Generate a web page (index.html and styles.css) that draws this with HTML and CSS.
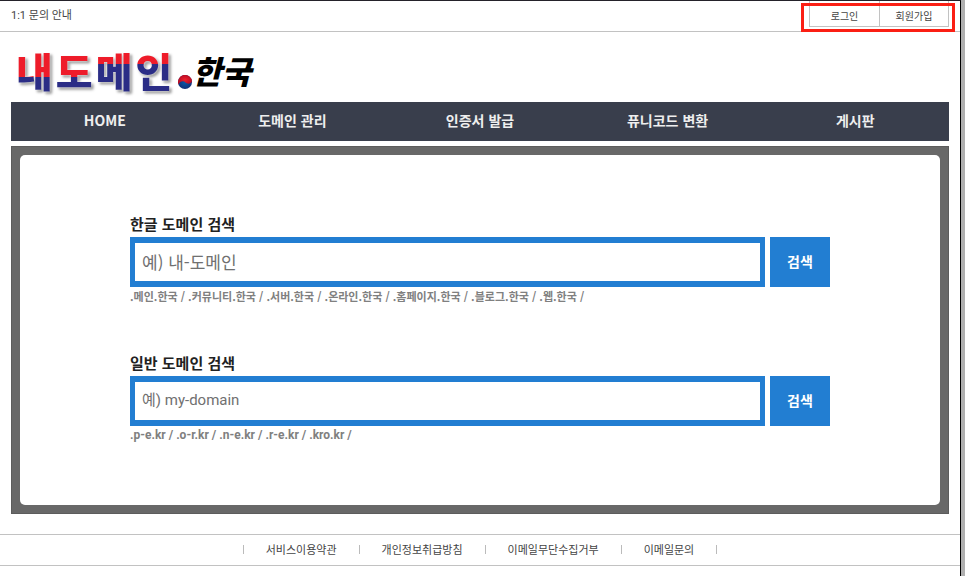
FILE: index.html
```html
<!DOCTYPE html>
<html lang="ko">
<head>
    <meta charset="UTF-8">
    <meta name="viewport" content="width=device-width, initial-scale=1.0">
    <title>내도메인.한국</title>
    <link rel="stylesheet" href="styles.css">
</head>

<body>
<div class="page">
    <header>
        <div class="top-bar">
            <a class="top-notice" href="#">1:1 문의 안내</a>
            <div class="member-links">
                <a href="#">로그인</a>
                <a href="#">회원가입</a>
                <span class="member-mark"></span>
            </div>
        </div>
        <h1 class="logo">
            <a href="#">
                <span class="logo-name"><span class="low">내</span><span class="low">도</span><span>메</span><span>인</span></span>
                <svg class="logo-dot" xmlns="http://www.w3.org/2000/svg" width="14" height="14" viewBox="0 0 14 14">
                    <defs>
                        <radialGradient id="dot-red"><stop offset="0" stop-color="#f0202c"/><stop offset="1" stop-color="#b80d25"/></radialGradient>
                        <radialGradient id="dot-blue"><stop offset="0" stop-color="#075bab"/><stop offset="1" stop-color="#123078"/></radialGradient>
                    </defs>
                    <circle cx="7" cy="7" r="7" fill="url(#dot-blue)"/>
                    <path fill="url(#dot-red)" d="M.5 9.5A7 7 0 1 1 14 6.5C12 9.5 9 9 7.5 7.5C5.500 5.500 2 6 .5 9.500"/>
                </svg>
                <span class="logo-tld">한국</span>
            </a>
        </h1>
        <nav class="main-menu">
            <a href="#">HOME</a>
            <a href="#">도메인 관리</a>
            <a href="#">인증서 발급</a>
            <a href="#">퓨니코드 변환</a>
            <a href="#">게시판</a>
        </nav>
    </header>

    <main class="search-panel">
        <div class="search-box">
            <form class="search-form">
                <label for="korean-domain">한글 도메인 검색</label>
                <div class="search-row">
                    <input type="text" id="korean-domain" placeholder="예) 내-도메인">
                    <button type="submit">검색</button>
                </div>
                <p class="search-hint">.메인.한국 / .커뮤니티.한국 / .서버.한국 / .온라인.한국 / .홈페이지.한국 / .블로그.한국 / .웹.한국 /</p>
            </form>
            <form class="search-form general">
                <label for="general-domain">일반 도메인 검색</label>
                <div class="search-row">
                    <input type="text" id="general-domain" placeholder="예) my-domain">
                    <button type="submit">검색</button>
                </div>
                <p class="search-hint">.p-e.kr / .o-r.kr / .n-e.kr / .r-e.kr / .kro.kr /</p>
            </form>
        </div>
    </main>

    <footer class="footer-links">
        <a href="#">서비스이용약관</a>
        <a href="#">개인정보취급방침</a>
        <a href="#">이메일무단수집거부</a>
        <a href="#">이메일문의</a>
    </footer>
</div>
</body>
</html>
```

FILE: styles.css
```css
* {
    box-sizing: border-box;
}

body {
    margin: 0;
    background: #b0b0b0;
    font-family: "Noto Sans CJK KR", sans-serif;
    font-size: 11px;
    color: #444;
}

a {
    color: inherit;
    text-decoration: none;
}

.page {
    min-height: 100vh;
    margin-right: 4px;
    background: #fff;
    border-top: 1px solid #24222a;
    border-right: 1px solid #000;
}

/* top bar */
.top-bar {
    display: flex;
    justify-content: space-between;
    height: 31px;
    padding: 0 11px;
    border-bottom: 1px solid #c2c2c2;
}

.top-notice {
    font-family: Roboto, "Noto Sans CJK KR", sans-serif;
    line-height: 30px;
}

.member-links {
    position: relative;
    display: flex;
    height: 26px;
    border: 1px solid #c2c2c2;
    border-top: 0;
    font-size: 10px;
    line-height: 30px;
    text-align: center;
}

.member-links a {
    width: 69px;
}

.member-links a + a {
    border-left: 1px solid #c2c2c2;
}

.member-mark {
    position: absolute;
    top: 2px;
    right: -7px;
    bottom: -6px;
    left: -9px;
    border: 3px solid #fb1f14;
    pointer-events: none;
}

/* logo */
.logo {
    margin: 0;
    height: 70px;
    padding: 10px 16px 0;
    line-height: 56px;
}

.logo a {
    display: inline-flex;
    align-items: center;
}

.logo-name {
    display: flex;
    gap: 3px;
    font-size: 40px;
    font-weight: 900;
    filter: drop-shadow(0 0 1px #fff) drop-shadow(2px 2px 1px rgba(0, 0, 0, .4));
}

.logo-name span {
    background: linear-gradient(#ee1c2a 40%, #2b2d86 40%);
    -webkit-background-clip: text;
    background-clip: text;
    color: transparent;
}

.logo-name .low {
    background-image: linear-gradient(#ee1c2a 62%, #2b2d86 62%);
}

.logo-dot {
    margin: 24px 0 0 6px;
}

.logo-tld {
    font-size: 32px;
    font-weight: 900;
    font-style: italic;
    color: #000;
}

.main-menu {
    display: grid;
    grid-template-columns: repeat(5, 1fr);
    height: 39px;
    margin: 0 11px;
    background: #393e4c;
    color: #eee;
    font-size: 14px;
    font-weight: bold;
    line-height: 37px;
    text-align: center;
}

/* domain search */
.search-panel {
    margin: 5px 11px 20px;
    padding: 8px;
    border: 1px solid #5c5c5c;
    background: #686868;
}

.search-box {
    display: flex;
    flex-direction: column;
    align-items: center;
    gap: 46px;
    padding: 57px 20px 61px;
    border-radius: 5px;
    background: #fff;
}

.search-form {
    width: 100%;
    max-width: 700px;
}

.search-form label {
    display: block;
    height: 25px;
    color: #222;
    font-size: 15px;
    font-weight: bold;
    line-height: 23px;
}

.search-row {
    display: flex;
    gap: 5px;
    height: 50px;
}

.search-row input {
    flex: 1;
    min-width: 0;
    padding: 0 7px 2px;
    border: 5px solid #227ed2;
    border-top-width: 6px;
    border-bottom-width: 6px;
    border-radius: 0;
    background: #fff;
    font-family: inherit;
    font-size: 17px;
}

.general input {
    font-family: Roboto, "Noto Sans CJK KR", sans-serif;
    font-size: 15px;
}

.general .search-hint {
    font-family: Roboto, "Noto Sans CJK KR", sans-serif;
    font-size: 12px;
}

.search-row input::placeholder {
    color: #707070;
}

.search-row button {
    width: 60px;
    padding: 0 0 2px;
    border: 0;
    background: #227ed2;
    color: #fff;
    font-family: inherit;
    font-size: 14px;
    font-weight: bold;
}

.search-hint {
    margin: 0;
    color: #808080;
    font-weight: bold;
    line-height: 18px;
}

.footer-links {
    display: flex;
    justify-content: center;
    align-items: center;
    height: 32px;
    border-top: 1px solid #c2c2c2;
    border-bottom: 1px solid #c2c2c2;
    line-height: 28px;
}

.footer-links a {
    display: flex;
    align-items: center;
    height: 30px;
    padding-bottom: 2px;
}

.footer-links a::after,
.footer-links a:first-child::before {
    content: "";
    width: 1px;
    height: 9px;
    margin: 0 22px;
    background: #bbb;
}
```
